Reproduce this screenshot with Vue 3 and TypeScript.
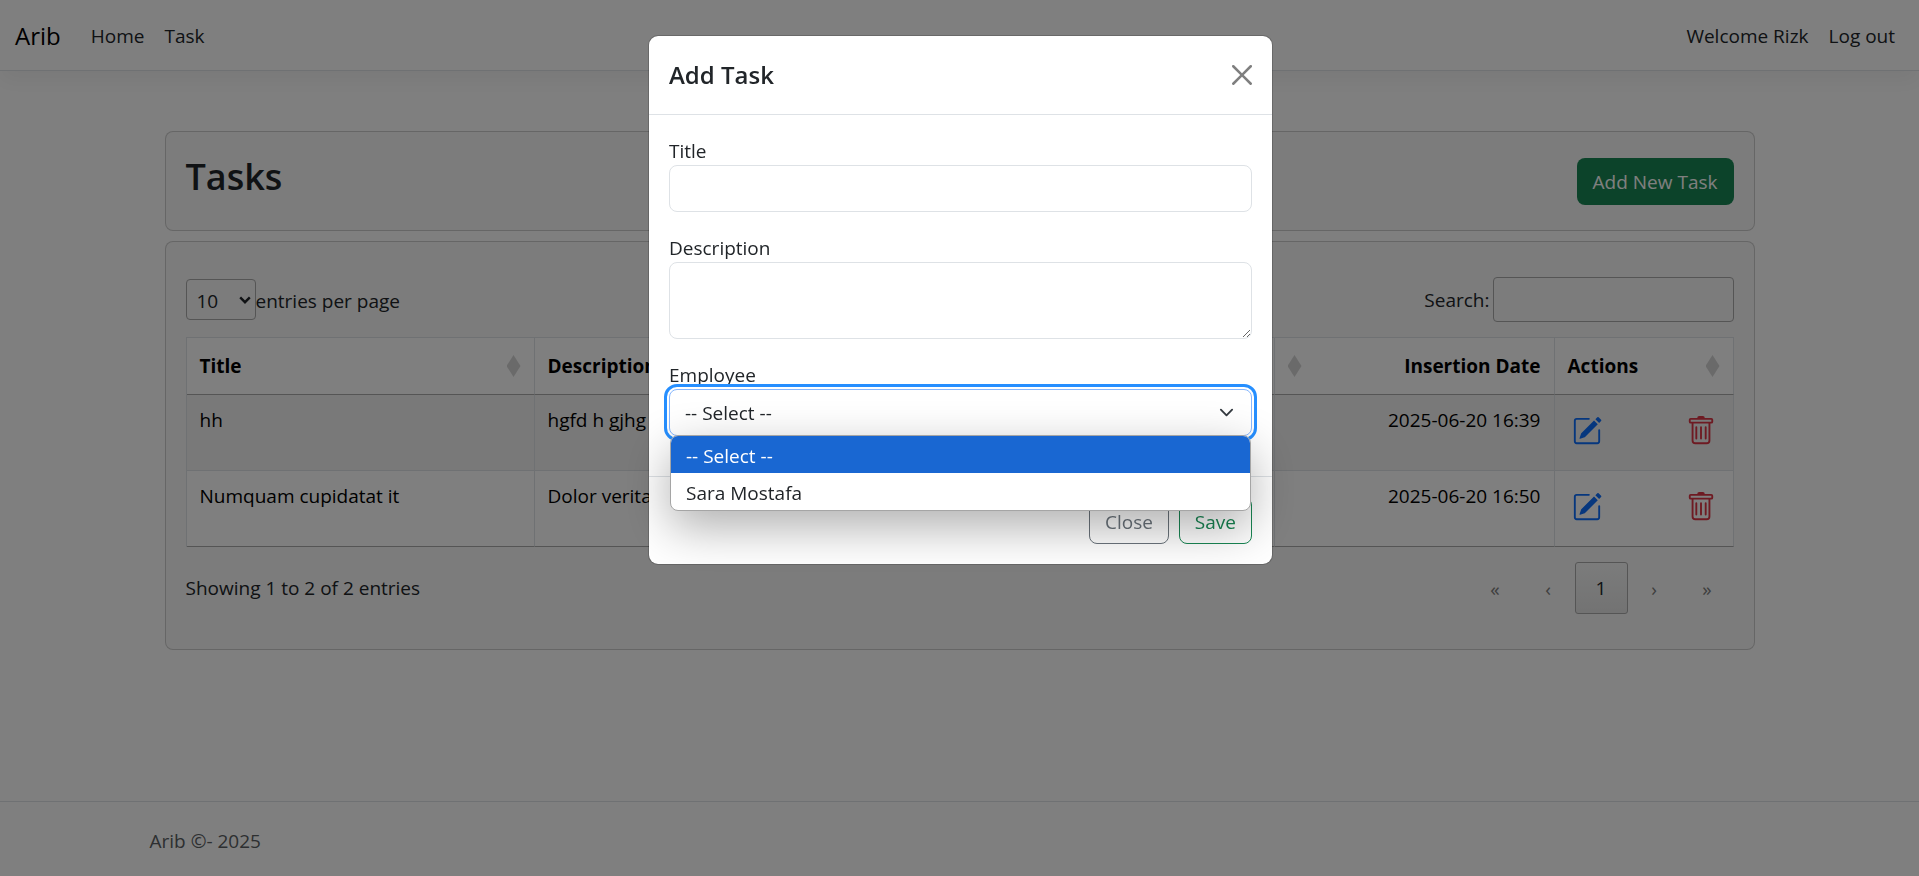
<script setup lang="ts">
import { ref } from 'vue'

interface Task {
  title: string
  description: string
  inserted: string
}

const tasks: Task[] = [
  { title: 'hh', description: 'hgfd h gjhg', inserted: '2025-06-20 16:39' },
  { title: 'Numquam cupidatat it', description: 'Dolor veritatis', inserted: '2025-06-20 16:50' },
]

const employees: string[] = ['-- Select --', 'Sara Mostafa']
const employee = ref(employees[0])
const pageSize = ref('10')
</script>

<template>
  <div class="page">
    <header class="navbar">
      <a class="brand" href="#">Arib</a>
      <nav class="nav">
        <a href="#">Home</a>
        <a href="#">Task</a>
      </nav>
      <nav class="nav account">
        <a href="#">Welcome Rizk</a>
        <a href="#">Log out</a>
      </nav>
    </header>

    <main class="content">
      <section class="card heading">
        <h1>Tasks</h1>
        <button type="button" class="btn btn-success">Add New Task</button>
      </section>

      <section class="card listing">
        <div class="toolbar">
          <div class="length">
            <span class="select-wrap">
              <select id="page-size" v-model="pageSize">
                <option>10</option>
                <option>25</option>
              </select>
              <svg class="caret" viewBox="0 0 12 8" width="12" height="8" aria-hidden="true">
                <path d="M1.2 1.4 6 6.2l4.8-4.8" fill="none" stroke="currentColor" stroke-width="2.4" />
              </svg>
            </span>
            <label for="page-size">entries per page</label>
          </div>
          <div class="search">
            <label for="search">Search:</label>
            <input id="search" type="search" />
          </div>
        </div>

        <table>
          <colgroup>
            <col class="c-title" />
            <col />
            <col class="c-date" />
            <col class="c-actions" />
          </colgroup>
          <thead>
            <tr>
              <th scope="col">
                <div class="th"><span>Title</span><i class="sort"></i></div>
              </th>
              <th scope="col">
                <div class="th"><span>Description</span></div>
              </th>
              <th scope="col">
                <div class="th reverse"><span>Insertion Date</span><i class="sort"></i></div>
              </th>
              <th scope="col">
                <div class="th"><span>Actions</span><i class="sort"></i></div>
              </th>
            </tr>
          </thead>
          <tbody>
            <tr v-for="task in tasks" :key="task.title">
              <td>{{ task.title }}</td>
              <td>{{ task.description }}</td>
              <td class="date">{{ task.inserted }}</td>
              <td>
                <div class="actions">
                  <button type="button" class="icon edit" aria-label="Edit">
                    <svg viewBox="0 0 16 16" width="30" height="30" fill="currentColor">
                      <path d="M15.502 1.94a.5.5 0 0 1 0 .706L14.459 3.69l-2-2L13.502.646a.5.5 0 0 1 .707 0l1.293 1.293zm-1.75 2.456-2-2L4.939 9.21a.5.5 0 0 0-.121.196l-.805 2.414a.25.25 0 0 0 .316.316l2.414-.805a.5.5 0 0 0 .196-.12l6.813-6.814z" />
                      <path fill-rule="evenodd" d="M1 13.5A1.5 1.5 0 0 0 2.5 15h11a1.5 1.5 0 0 0 1.5-1.5v-6a.5.5 0 0 0-1 0v6a.5.5 0 0 1-.5.5h-11a.5.5 0 0 1-.5-.5v-11a.5.5 0 0 1 .5-.5H9a.5.5 0 0 0 0-1H2.5A1.5 1.5 0 0 0 1 2.5z" />
                    </svg>
                  </button>
                  <button type="button" class="icon remove" aria-label="Delete">
                    <svg viewBox="0 0 16 16" width="30" height="30" fill="currentColor">
                      <path d="M5.5 5.5A.5.5 0 0 1 6 6v6a.5.5 0 0 1-1 0V6a.5.5 0 0 1 .5-.5m2.5 0a.5.5 0 0 1 .5.5v6a.5.5 0 0 1-1 0V6a.5.5 0 0 1 .5-.5m3 .5a.5.5 0 0 0-1 0v6a.5.5 0 0 0 1 0z" />
                      <path d="M14.5 3a1 1 0 0 1-1 1H13v9a2 2 0 0 1-2 2H5a2 2 0 0 1-2-2V4h-.5a1 1 0 0 1-1-1V2a1 1 0 0 1 1-1H6a1 1 0 0 1 1-1h2a1 1 0 0 1 1 1h3.5a1 1 0 0 1 1 1zM4.118 4 4 4.059V13a1 1 0 0 0 1 1h6a1 1 0 0 0 1-1V4.059L11.882 4zM2.5 3h11V2h-11z" />
                    </svg>
                  </button>
                </div>
              </td>
            </tr>
          </tbody>
        </table>

        <div class="table-foot">
          <span>Showing 1 to 2 of 2 entries</span>
          <nav class="pages" aria-label="pagination">
            <button type="button" disabled>«</button>
            <button type="button" disabled>‹</button>
            <button type="button" class="current">1</button>
            <button type="button" disabled>›</button>
            <button type="button" disabled>»</button>
          </nav>
        </div>
      </section>
    </main>

    <footer class="site-footer">
      <div class="footer-inner">Arib ©- 2025</div>
    </footer>

    <div class="backdrop">
      <form class="modal" role="dialog" aria-labelledby="modal-title" @submit.prevent>
        <div class="modal-header">
          <h2 id="modal-title">Add Task</h2>
          <button type="button" class="close" aria-label="Close">
            <svg viewBox="0 0 16 16" width="20" height="20" fill="currentColor">
              <path d="M.293.293a1 1 0 0 1 1.414 0L8 6.586 14.293.293a1 1 0 1 1 1.414 1.414L9.414 8l6.293 6.293a1 1 0 0 1-1.414 1.414L8 9.414l-6.293 6.293a1 1 0 0 1-1.414-1.414L6.586 8 .293 1.707a1 1 0 0 1 0-1.414z" />
            </svg>
          </button>
        </div>
        <div class="modal-body">
          <div class="field">
            <label for="title">Title</label>
            <input id="title" class="control" type="text" />
          </div>
          <div class="field">
            <label for="description">Description</label>
            <textarea id="description" class="control"></textarea>
          </div>
          <div class="field">
            <label for="employee">Employee</label>
            <div class="combo">
              <select id="employee" v-model="employee" class="control">
                <option v-for="name in employees" :key="name">{{ name }}</option>
              </select>
              <svg class="chevron" viewBox="0 0 16 16" width="15" height="15" aria-hidden="true">
                <path d="m2 5 6 6 6-6" fill="none" stroke="#343a40" stroke-width="2" stroke-linecap="round" stroke-linejoin="round" />
              </svg>
              <ul class="options" role="listbox" aria-label="Employee">
                <li
                  v-for="name in employees"
                  :key="name"
                  role="option"
                  :aria-selected="name === employee"
                  :class="{ active: name === employee }"
                  @click="employee = name"
                >
                  {{ name }}
                </li>
              </ul>
            </div>
          </div>
        </div>
        <div class="modal-footer">
          <button type="button" class="btn btn-outline">Close</button>
          <button type="submit" class="btn btn-outline-success">Save</button>
        </div>
      </form>
    </div>
  </div>
</template>

<style>
body {
  margin: 0;
  background: #fff;
}
</style>

<style scoped>
* {
  box-sizing: border-box;
}

.page {
  min-height: 100vh;
  display: flex;
  flex-direction: column;
  font-family: 'Open Sans', 'Noto Sans', sans-serif;
  font-size: 19px;
  line-height: 30px;
  color: #212529;
}

a {
  color: inherit;
  text-decoration: none;
}

button,
input,
select,
textarea {
  font: inherit;
  color: inherit;
}

.navbar {
  display: flex;
  align-items: center;
  height: 71px;
  padding: 2px 24px 0 15px;
  border-bottom: 1px solid #dee2e6;
  box-shadow: 0 10px 20px rgba(0, 0, 0, 0.05);
}

.brand {
  margin-right: 30px;
  font-size: 24px;
  color: #000;
}

.nav {
  display: flex;
  gap: 20px;
}

.account {
  margin-left: auto;
}

.content {
  display: flex;
  flex-direction: column;
  gap: 10px;
  width: 100%;
  max-width: 1630px;
  margin: 60px auto 0;
  padding: 0 20px;
}

.card {
  background: #f8f8f8;
  border: 1px solid rgba(0, 0, 0, 0.175);
  border-radius: 8px;
}

.heading {
  display: flex;
  align-items: center;
  justify-content: space-between;
  padding: 20px;
}

h1 {
  margin: 0 0 8px;
  font-size: 36px;
  line-height: 50px;
  font-weight: 600;
}

.btn {
  height: 47px;
  padding: 2px 15px 0;
  border: 1px solid transparent;
  border-radius: 8px;
  background: transparent;
}

.btn-success {
  background: #198754;
  color: #fff;
}

.btn-outline {
  border-color: #6c757d;
  color: #6c757d;
}

.btn-outline-success {
  border-color: #198754;
  color: #198754;
}

.listing {
  padding: 35px 20px;
}

.toolbar,
.table-foot {
  display: flex;
  align-items: center;
  justify-content: space-between;
}

.length,
.search {
  display: flex;
  align-items: center;
}

.search {
  gap: 3px;
}

.length label {
  padding-top: 2px;
}

.select-wrap {
  position: relative;
  display: flex;
}

.select-wrap select {
  appearance: none;
  width: 70px;
  height: 41px;
  padding: 2px 10px 0;
  background: transparent;
  border: 1px solid #aaa;
  border-radius: 4px;
}

.caret {
  position: absolute;
  right: 5px;
  top: 17px;
  pointer-events: none;
}

.search input {
  width: 241px;
  height: 45px;
  padding: 5px;
  background: transparent;
  border: 1px solid #aaa;
  border-radius: 4px;
}

table {
  width: 100%;
  margin: 15px 0;
  table-layout: fixed;
  border-collapse: separate;
  border-spacing: 0;
  background: #fff;
  color: #000;
  border-left: 1px solid #dee2e6;
}

.c-title {
  width: 348px;
}

.c-date {
  width: 280px;
}

.c-actions {
  width: 179px;
}

th,
td {
  padding: 10px 13px;
  border-right: 1px solid #dee2e6;
  text-align: left;
  vertical-align: top;
}

th {
  padding: 13px;
  height: 57px;
  border-top: 1px solid #dee2e6;
  border-bottom: 1px solid #aaa;
}

td {
  height: 76px;
  border-bottom: 1px solid #dee2e6;
}

tbody tr:nth-child(odd) {
  background: #f2f2f2;
}

tbody tr:last-child td {
  border-bottom-color: #aaa;
}

.th {
  display: flex;
  align-items: center;
  justify-content: space-between;
}

.reverse {
  flex-direction: row-reverse;
}

.sort {
  width: 14px;
  height: 22px;
  background: #d5d5d5;
  clip-path: polygon(50% 0, 100% 50%, 50% 100%, 0 50%);
}

.date {
  text-align: right;
}

.actions {
  display: flex;
  justify-content: space-between;
  padding: 11px 4px 0;
}

.icon {
  display: flex;
  padding: 0;
  border: 0;
  background: none;
}

.edit {
  color: #0d6efd;
}

.remove {
  color: #dc3545;
}

.pages {
  display: flex;
}

.pages button {
  width: 53px;
  height: 52px;
  padding: 0;
  border: 1px solid transparent;
  border-radius: 3px;
  background: none;
}

.pages button:disabled {
  padding-top: 2px;
  color: #7d7d7d;
}

.pages .current {
  border-color: #aaa;
  background: linear-gradient(#f7f8f8, #e6e6e6);
}

.site-footer {
  margin-top: auto;
  padding-top: 4px;
  border-top: 1px solid #dee2e6;
  line-height: 70px;
  color: #5a5e62;
}

.footer-inner {
  max-width: 1650px;
  margin: 0 auto;
  padding: 0 15px;
}

.backdrop {
  position: fixed;
  inset: 0;
  padding: 35px 15px 35px 17px;
  overflow: hidden;
  background: rgba(0, 0, 0, 0.5);
}

.modal {
  max-width: 625px;
  margin: 0 auto;
  background: #fff;
  background-clip: padding-box;
  border: 1px solid rgba(0, 0, 0, 0.175);
  border-radius: 10px;
}

.modal-header {
  display: flex;
  align-items: center;
  justify-content: space-between;
  padding: 20px;
  border-bottom: 1px solid #dee2e6;
}

h2 {
  margin: 0;
  font-size: 24px;
  line-height: 38px;
  font-weight: 600;
}

.close {
  display: flex;
  padding: 0;
  border: 0;
  background: none;
  color: #7f7f7f;
}

.modal-body {
  display: flex;
  flex-direction: column;
  gap: 20px;
  padding: 20px 20px 40px;
}

.field {
  display: flex;
  flex-direction: column;
}

.field label {
  padding-top: 2px;
  line-height: 28px;
}

.control {
  display: block;
  width: 100%;
  height: 47px;
  padding: 0 15px;
  background: #fff;
  border: 1px solid #dee2e6;
  border-radius: 8px;
}

textarea.control {
  height: 77px;
}

.combo {
  position: relative;
}

.combo .control {
  appearance: none;
  border-color: #86b7fe;
  outline: 3px solid #268fff;
  outline-offset: 2px;
}

.chevron {
  position: absolute;
  right: 18px;
  top: 16px;
  pointer-events: none;
}

.options {
  position: absolute;
  top: 46px;
  left: 1px;
  right: 1px;
  margin: 0;
  padding: 0;
  list-style: none;
  overflow: hidden;
  background: #fff;
  border: 1px solid #a5a5a5;
  border-radius: 8px;
  box-shadow: 0 16px 48px rgba(0, 0, 0, 0.32);
}

.options li {
  padding: 3px 15px 0;
  line-height: 34px;
}

.options .active {
  background: #1967d2;
  color: #fff;
}

.modal-footer {
  display: flex;
  justify-content: flex-end;
  gap: 10px;
  padding: 20px;
  border-top: 1px solid #dee2e6;
}
</style>
